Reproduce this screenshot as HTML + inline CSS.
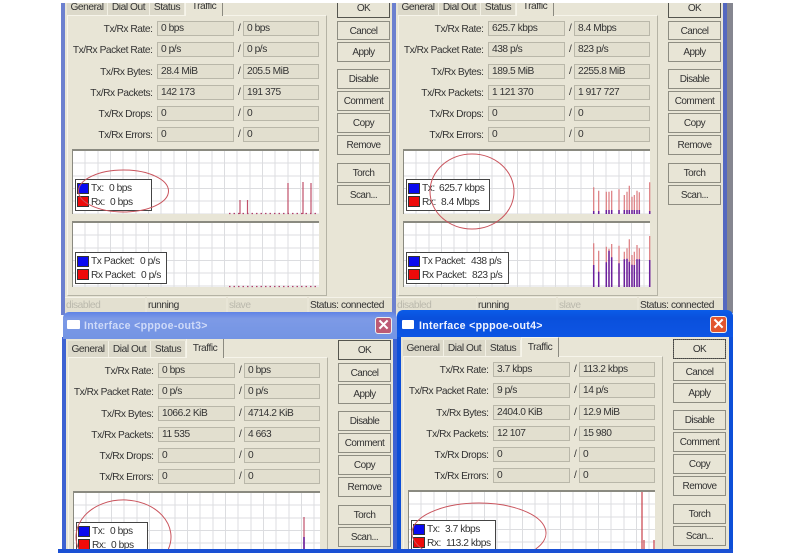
<!DOCTYPE html>
<html><head><meta charset="utf-8"><title>Interface</title>
<style>
html,body{margin:0;padding:0;background:#fff;overflow:hidden}
#s{position:relative;width:800px;height:553px;overflow:hidden;background:#fff;font-family:"Liberation Sans",sans-serif;font-size:10.2px;letter-spacing:-.45px;color:#333;filter:blur(.35px)}
#s div{position:absolute;box-sizing:border-box}
.w{overflow:hidden}
.i{width:400px;height:320px}
.bg{left:65px;top:-10px;width:327px;height:330px;background:#e8e5d6}
.bl{left:61px;top:-10px;width:4px;height:330px}
.br{left:392px;top:-10px;width:5px;height:330px}
.tc{left:67px;top:14.5px;width:260px;height:281px;border:1px solid #f6f4ea;border-right-color:#b5b3a5;border-bottom-color:#b5b3a5;background:#e8e5d6}
.t{top:-1px;height:15.5px;background:#dcd9ca;line-height:17px;text-align:center;border-right:1px solid #f2f0e4}
.t.a{top:-4px;height:19.500px;background:#e8e5d6;line-height:19px;border:1px solid #f6f4ea;border-right-color:#8b8a80;border-bottom:0}
.t1{left:67px;width:41px}.t2{left:108px;width:42px}.t3{left:150px;width:35px}.t4{left:185px;width:38px}
.l{left:60px;width:92.5px;height:16px;line-height:17px;text-align:right;white-space:nowrap}
.f,.g{height:15px;line-height:14.500px;padding-left:3px;background:#e2dfcf;border:1px solid #b9b7a9;white-space:nowrap}
.f{left:157px;width:77px}.g{left:243px;width:76px}
.sl{left:238px;width:5px;height:16px;line-height:16px}
.r1{top:21px}.r2{top:42px}.r3{top:64px}.r4{top:85px}.r5{top:106px}.r6{top:127px}
.b{left:337px;width:53px;height:19.5px;line-height:19px;text-align:center;background:#e8e5d6;border:1px solid #8e8d82;font-size:10px;letter-spacing:-.55px}
.ok{top:-2px;height:19.5px;border:1.4px solid #55554e}
.b1{top:20.5px}.b2{top:42px}.b3{top:69px}.b4{top:91px}.b5{top:113px}.b6{top:135px}.b7{top:163px}.b8{top:185px}
.gr{left:72px;width:247px;background-color:#fff;border-top:2px solid #8a8a80;border-left:1px solid #8a8a80;background-image:repeating-linear-gradient(90deg,transparent 0,transparent 11.67px,#dcdde0 11.67px,#dcdde0 12.67px),repeating-linear-gradient(180deg,transparent 0,transparent 11.67px,#dcdde0 11.67px,#dcdde0 12.67px)}
.g1{top:149px;height:65px}.g2{top:221px;height:66px}
.lg{background:#fff;border:1px solid #444;height:32px;left:75px}
.sw{width:12px;height:11px;left:77px;border:1px solid #333}
.bu{background:#0a0af0}.re{background:#ee0a0a}
.x{white-space:nowrap;height:13px;line-height:13px}
.st{top:297px;height:15px;line-height:16px;padding-left:1px;background:#e3e0d0;border-top:1px solid #f4f2e8;white-space:nowrap}
.d{color:#bab8ac}
svg{position:absolute;left:0;top:0}
.tb{border-radius:6px 6px 0 0;height:27px}
.tt{font-weight:bold;font-size:10.6px;letter-spacing:.3px;line-height:14px;height:14px;white-space:nowrap}
.ic{background:#fff;height:9px;width:13px;border-radius:1px}
.cl{width:17px;height:17px;border-radius:3px;border:1px solid #eee;color:#fff;font-weight:bold;font-size:15px;line-height:15px;text-align:center;letter-spacing:0}
</style></head><body><div id="s">

<div style="left:727px;top:3px;width:6px;height:310px;background:#858690"></div>

<!-- window 1 -->
<div class="w" style="left:0;top:3px;width:397px;height:312px"><div class="i" style="left:0;top:-3px">
<div class="bg"></div><div class="bl" style="background:#6c80cf"></div><div class="br" style="background:#6c80cf"></div>
<div class="tc"></div>
<div class="t t1">General</div><div class="t t2">Dial Out</div><div class="t t3">Status</div><div class="t a t4">Traffic</div>
<div class="l r1">Tx/Rx Rate:</div><div class="f r1">0 bps</div><div class="sl r1">/</div><div class="g r1">0 bps</div>
<div class="l r2">Tx/Rx Packet Rate:</div><div class="f r2">0 p/s</div><div class="sl r2">/</div><div class="g r2">0 p/s</div>
<div class="l r3">Tx/Rx Bytes:</div><div class="f r3">28.4 MiB</div><div class="sl r3">/</div><div class="g r3">205.5 MiB</div>
<div class="l r4">Tx/Rx Packets:</div><div class="f r4">142 173</div><div class="sl r4">/</div><div class="g r4">191 375</div>
<div class="l r5">Tx/Rx Drops:</div><div class="f r5">0</div><div class="sl r5">/</div><div class="g r5">0</div>
<div class="l r6">Tx/Rx Errors:</div><div class="f r6">0</div><div class="sl r6">/</div><div class="g r6">0</div>
<div class="b ok">OK</div><div class="b b1">Cancel</div><div class="b b2">Apply</div><div class="b b3">Disable</div><div class="b b4">Comment</div><div class="b b5">Copy</div><div class="b b6">Remove</div><div class="b b7">Torch</div><div class="b b8">Scan...</div>
<div class="gr g1"></div><div class="gr g2"></div>
<svg width="400" height="320"><path d="M240 200V214M247.500 200V214M288 183V214M303 182V214M311 183V214" stroke="#c0506a" stroke-width="1.200" fill="none"/><path d="M229 213.500H319M229 286.500H319" stroke="#b0406a" stroke-width="1.300" stroke-dasharray="1.500 3" fill="none"/></svg>
<div class="lg" style="top:179px;width:77px"></div>
<div class="sw bu" style="top:183px"></div><div class="sw re" style="top:196px"></div>
<div class="x" style="left:91px;top:182px">Tx:</div><div class="x" style="left:109px;top:182px">0 bps</div>
<div class="x" style="left:91px;top:196px">Rx:</div><div class="x" style="left:110px;top:196px">0 bps</div>
<div class="lg" style="top:252px;width:92px"></div>
<div class="sw bu" style="top:256px"></div><div class="sw re" style="top:269px"></div>
<div class="x" style="left:91px;top:255px">Tx Packet:</div><div class="x" style="left:140px;top:255px">0 p/s</div>
<div class="x" style="left:91px;top:269px">Rx Packet:</div><div class="x" style="left:141px;top:269px">0 p/s</div>
<svg width="400" height="320"><ellipse cx="123.500" cy="191" rx="45" ry="21" fill="none" stroke="#c9535c"/></svg>
<div class="st d" style="left:65px;width:80px">disabled</div><div class="st" style="left:147px;width:79px">running</div><div class="st d" style="left:228px;width:79px">slave</div><div class="st" style="left:309px;width:83px">Status: connected</div>
</div></div>

<!-- window 2 -->
<div class="w" style="left:396px;top:3px;width:331px;height:312px"><div class="i" style="left:-65px;top:-3px">
<div class="bg"></div><div class="br" style="background:#5468c0"></div>
<div class="tc"></div>
<div class="t t1">General</div><div class="t t2">Dial Out</div><div class="t t3">Status</div><div class="t a t4">Traffic</div>
<div class="l r1">Tx/Rx Rate:</div><div class="f r1">625.7 kbps</div><div class="sl r1">/</div><div class="g r1">8.4 Mbps</div>
<div class="l r2">Tx/Rx Packet Rate:</div><div class="f r2">438 p/s</div><div class="sl r2">/</div><div class="g r2">823 p/s</div>
<div class="l r3">Tx/Rx Bytes:</div><div class="f r3">189.5 MiB</div><div class="sl r3">/</div><div class="g r3">2255.8 MiB</div>
<div class="l r4">Tx/Rx Packets:</div><div class="f r4">1 121 370</div><div class="sl r4">/</div><div class="g r4">1 917 727</div>
<div class="l r5">Tx/Rx Drops:</div><div class="f r5">0</div><div class="sl r5">/</div><div class="g r5">0</div>
<div class="l r6">Tx/Rx Errors:</div><div class="f r6">0</div><div class="sl r6">/</div><div class="g r6">0</div>
<div class="b ok">OK</div><div class="b b1">Cancel</div><div class="b b2">Apply</div><div class="b b3">Disable</div><div class="b b4">Comment</div><div class="b b5">Copy</div><div class="b b6">Remove</div><div class="b b7">Torch</div><div class="b b8">Scan...</div>
<div class="gr g1"></div><div class="gr g2"></div>
<svg width="400" height="320"><path d="M262.700 187.300V214M267.700 190.700V214M275.300 191.700V214M278 191.700V214M280.700 190.700V214M288 189.300V214M293.300 195V214M296 191.700V214M298.300 185.700V214M301 196.700V214M303.300 195V214M306 190.700V214M308.300 192.300V214M318.700 182.300V214M262.700 243.300V287M267.700 250.700V287M275.300 246.700V287M278 248.700V287M280.700 244V287M288 245.700V287M293.300 251.700V287M296 248.300V287M298.300 239.300V287M301 255V287M303.300 251.700V287M306 245V287M308.300 248.300V287M318.700 236V287" stroke="#dc7a7e" stroke-width="1.200" fill="none"/><path d="M262.700 211V214M267.700 211V214M275.300 210V214M278 210V214M280.700 210V214M288 210V214M293.300 210V214M296 210V214M298.300 210V214M301 210V214M303.300 210V214M306 210V214M308.300 210V214M318.700 211V214M262.700 265V287M267.700 271.700V287M275.300 262.300V287M278 250.700V287M280.700 257.300V287M288 263.300V287M293.300 259.300V287M296 258.700V287M298.300 261.700V287M301 264.700V287M303.300 265V287M306 259.300V287M308.300 259.300V287M318.700 260V287" stroke="#6a1f9c" stroke-width="1.500" fill="none"/></svg>
<div class="lg" style="top:179px;width:84px"></div>
<div class="sw bu" style="top:183px"></div><div class="sw re" style="top:196px"></div>
<div class="x" style="left:91px;top:182px">Tx:</div><div class="x" style="left:108px;top:182px">625.7 kbps</div>
<div class="x" style="left:91px;top:196px">Rx:</div><div class="x" style="left:110px;top:196px">8.4 Mbps</div>
<div class="lg" style="top:252px;width:103px"></div>
<div class="sw bu" style="top:256px"></div><div class="sw re" style="top:269px"></div>
<div class="x" style="left:91px;top:255px">Tx Packet:</div><div class="x" style="left:140px;top:255px">438 p/s</div>
<div class="x" style="left:91px;top:269px">Rx Packet:</div><div class="x" style="left:141px;top:269px">823 p/s</div>
<svg width="400" height="320"><ellipse cx="141" cy="191.500" rx="42" ry="37.500" fill="none" stroke="#c9535c"/></svg>
<div class="st d" style="left:65px;width:80px">disabled</div><div class="st" style="left:146px;width:79px">running</div><div class="st d" style="left:227px;width:79px">slave</div><div class="st" style="left:308px;width:84px">Status: connected</div>
</div></div>

<!-- window 3 -->
<div class="w" style="left:61px;top:337px;width:336px;height:216px"><div class="i" style="left:-60px;top:5px;height:211px">
<div class="bg" style="height:221px"></div><div class="bl" style="background:#3d62d2;height:221px"></div><div class="br" style="background:#3d62d2;height:221px"></div>
<div class="tc" style="height:196px"></div>
<div class="t t1">General</div><div class="t t2">Dial Out</div><div class="t t3">Status</div><div class="t a t4">Traffic</div>
<div class="l r1">Tx/Rx Rate:</div><div class="f r1">0 bps</div><div class="sl r1">/</div><div class="g r1">0 bps</div>
<div class="l r2">Tx/Rx Packet Rate:</div><div class="f r2">0 p/s</div><div class="sl r2">/</div><div class="g r2">0 p/s</div>
<div class="l r3">Tx/Rx Bytes:</div><div class="f r3">1066.2 KiB</div><div class="sl r3">/</div><div class="g r3">4714.2 KiB</div>
<div class="l r4">Tx/Rx Packets:</div><div class="f r4">11 535</div><div class="sl r4">/</div><div class="g r4">4 663</div>
<div class="l r5">Tx/Rx Drops:</div><div class="f r5">0</div><div class="sl r5">/</div><div class="g r5">0</div>
<div class="l r6">Tx/Rx Errors:</div><div class="f r6">0</div><div class="sl r6">/</div><div class="g r6">0</div>
<div class="b ok">OK</div><div class="b b1">Cancel</div><div class="b b2">Apply</div><div class="b b3">Disable</div><div class="b b4">Comment</div><div class="b b5">Copy</div><div class="b b6">Remove</div><div class="b b7">Torch</div><div class="b b8">Scan...</div>
<div class="gr g1" style="height:61px"></div>
<svg width="400" height="211"><path d="M303 175V210" stroke="#c0506a" stroke-width="1.200" fill="none"/><path d="M303 195V210" stroke="#6a1f9c" stroke-width="1.600" fill="none"/></svg>
<div class="lg" style="top:180px;width:72px;height:28px"></div>
<div class="sw bu" style="top:184px"></div><div class="sw re" style="top:197px"></div>
<div class="x" style="left:91px;top:183px">Tx:</div><div class="x" style="left:109px;top:183px">0 bps</div>
<div class="x" style="left:91px;top:197px">Rx:</div><div class="x" style="left:110px;top:197px">0 bps</div>
<svg width="400" height="211"><path d="M77.600 207A47.500 37 0 1 1 167.400 207" fill="none" stroke="#c9535c"/></svg>
</div></div>
<div class="tb" style="left:63px;top:312px;width:334px;background:linear-gradient(#5f83e6,#7d9ae6 25%,#7394e4)"></div>
<div class="ic" style="left:67px;top:320px"></div>
<div class="tt" style="left:84px;top:319px;color:#cfdaf8">Interface &lt;pppoe-out3&gt;</div>
<div class="cl" style="left:375px;top:317px;background:#bd5a74">✕</div>

<!-- window 4 -->
<div class="w" style="left:397px;top:336px;width:336px;height:217px"><div class="i" style="left:-61px;top:5px;height:212px">
<div class="bg" style="width:328px;height:222px"></div><div class="bl" style="background:#0d4fd8;height:222px"></div><div class="br" style="background:#0d4fd8;left:393px;height:222px"></div>
<div class="tc" style="height:197px"></div>
<div class="t t1">General</div><div class="t t2">Dial Out</div><div class="t t3">Status</div><div class="t a t4">Traffic</div>
<div class="l r1">Tx/Rx Rate:</div><div class="f r1">3.7 kbps</div><div class="sl r1">/</div><div class="g r1">113.2 kbps</div>
<div class="l r2">Tx/Rx Packet Rate:</div><div class="f r2">9 p/s</div><div class="sl r2">/</div><div class="g r2">14 p/s</div>
<div class="l r3">Tx/Rx Bytes:</div><div class="f r3">2404.0 KiB</div><div class="sl r3">/</div><div class="g r3">12.9 MiB</div>
<div class="l r4">Tx/Rx Packets:</div><div class="f r4">12 107</div><div class="sl r4">/</div><div class="g r4">15 980</div>
<div class="l r5">Tx/Rx Drops:</div><div class="f r5">0</div><div class="sl r5">/</div><div class="g r5">0</div>
<div class="l r6">Tx/Rx Errors:</div><div class="f r6">0</div><div class="sl r6">/</div><div class="g r6">0</div>
<div class="b ok" style="border:1.400px solid #66665e;outline:1px dotted #444;outline-offset:-1px">OK</div><div class="b b1">Cancel</div><div class="b b2">Apply</div><div class="b b3">Disable</div><div class="b b4">Comment</div><div class="b b5">Copy</div><div class="b b6">Remove</div><div class="b b7">Torch</div><div class="b b8">Scan...</div>
<div class="gr g1" style="height:62px"></div>
<svg width="400" height="212"><path d="M306 151V210M308 199V210M318 199V210" stroke="#c8404a" stroke-width="1.200" fill="none"/></svg>
<div class="lg" style="top:179px;width:85px;height:30px"></div>
<div class="sw bu" style="top:183px"></div><div class="sw re" style="top:196px"></div>
<div class="x" style="left:91px;top:182px">Tx:</div><div class="x" style="left:109px;top:182px">3.7 kbps</div>
<div class="x" style="left:91px;top:196px">Rx:</div><div class="x" style="left:110px;top:196px">113.2 kbps</div>
<svg width="400" height="212"><path d="M86.300 208A67 30 0 1 1 199.700 208" fill="none" stroke="#c9535c"/></svg>
</div></div>
<div class="tb" style="left:397px;top:310px;width:336px;background:linear-gradient(#0b5ce8,#0a50dc 30%,#0d55e4)"></div>
<div class="ic" style="left:402px;top:320px;width:12px"></div>
<div class="tt" style="left:419px;top:318.500px;color:#f2f5ff">Interface &lt;pppoe-out4&gt;</div>
<div class="cl" style="left:710px;top:316px;background:#e2552e">✕</div>

<div style="left:58px;top:549px;width:675px;height:4px;background:#1a50d4"></div>
</div></body></html>
